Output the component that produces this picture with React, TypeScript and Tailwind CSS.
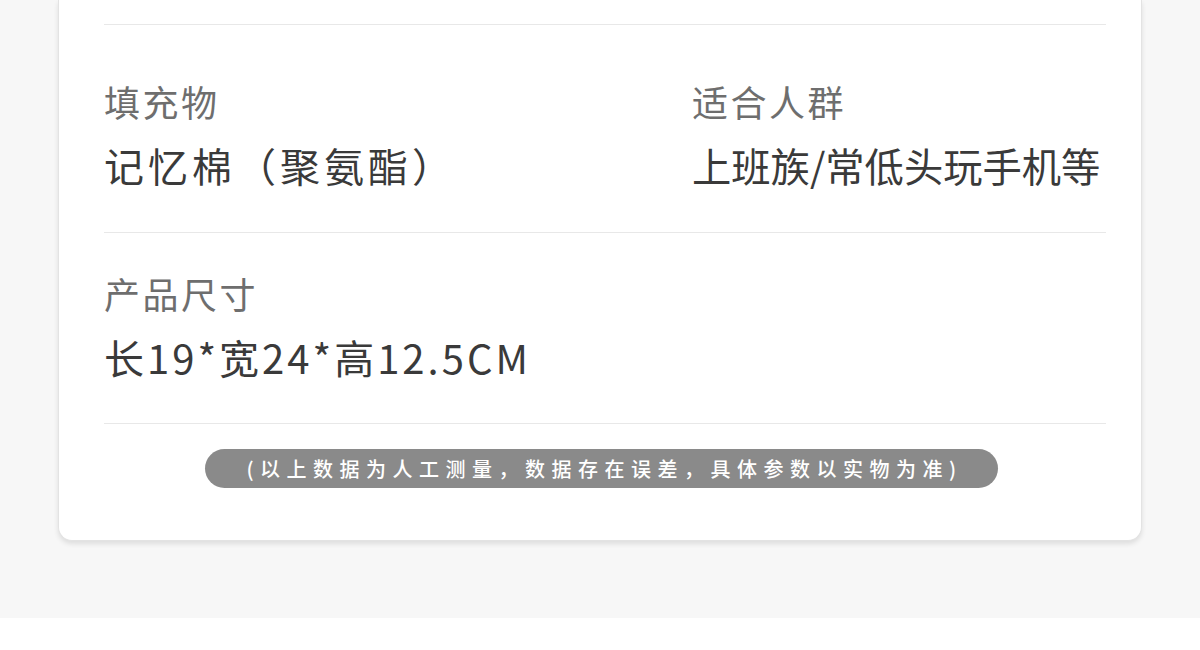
import React from 'react';

const font = { fontFamily: '"Noto Sans CJK SC", "Noto Sans", sans-serif' };

const Field = ({ label, value, valueClass }: { label: string; value: string; valueClass: string }) => (
  <div>
    <div className="text-[36px] leading-[40px] text-[#6e6e6e] tracking-[2.5px] whitespace-nowrap">{label}</div>
    <div className={`mt-[19px] leading-[50px] text-[#3a3a3a] whitespace-nowrap ${valueClass}`}>{value}</div>
  </div>
);

export default function App() {
  return (
    <div className="w-full h-[650px] bg-white flex flex-col" style={font}>
      <div className="h-[618px] bg-[#f7f7f7] px-[58px]">
        <div className="h-[541px] bg-white rounded-b-[14px] border-x border-b border-[#e3e3e3] shadow-[0_3px_5px_rgba(0,0,0,0.1)] pl-[45px] pr-[35px]">
          <div className="pt-[24px]">
            <div className="h-px bg-[#e8e8e8]" />
          </div>

          {/* 填充物 / 适合人群 */}
          <div className="grid grid-cols-[588px_1fr] pt-[56px] pb-[42px]">
            <Field label="填充物" value="记忆棉（聚氨酯）" valueClass="text-[40px] tracking-[4px]" />
            <Field label="适合人群" value="上班族/常低头玩手机等" valueClass="text-[39.3px] tracking-[0px]" />
          </div>
          <div className="h-px bg-[#e8e8e8]" />

          {/* 产品尺寸 */}
          <div className="pt-[40px] pb-[41px]">
            <Field label="产品尺寸" value="长19*宽24*高12.5CM" valueClass="text-[40px] tracking-[3px]" />
          </div>
          <div className="h-px bg-[#e8e8e8]" />

          <div className="pt-[25px] flex justify-center pr-[8px]">
            <div className="w-[793px] h-[39px] rounded-full bg-[#8a8a8a] flex items-center justify-center text-white text-[20px] font-medium tracking-[6.5px] pl-[7px] whitespace-nowrap">
              (以上数据为人工测量，数据存在误差，具体参数以实物为准)
            </div>
          </div>
        </div>
      </div>
    </div>
  );
}
